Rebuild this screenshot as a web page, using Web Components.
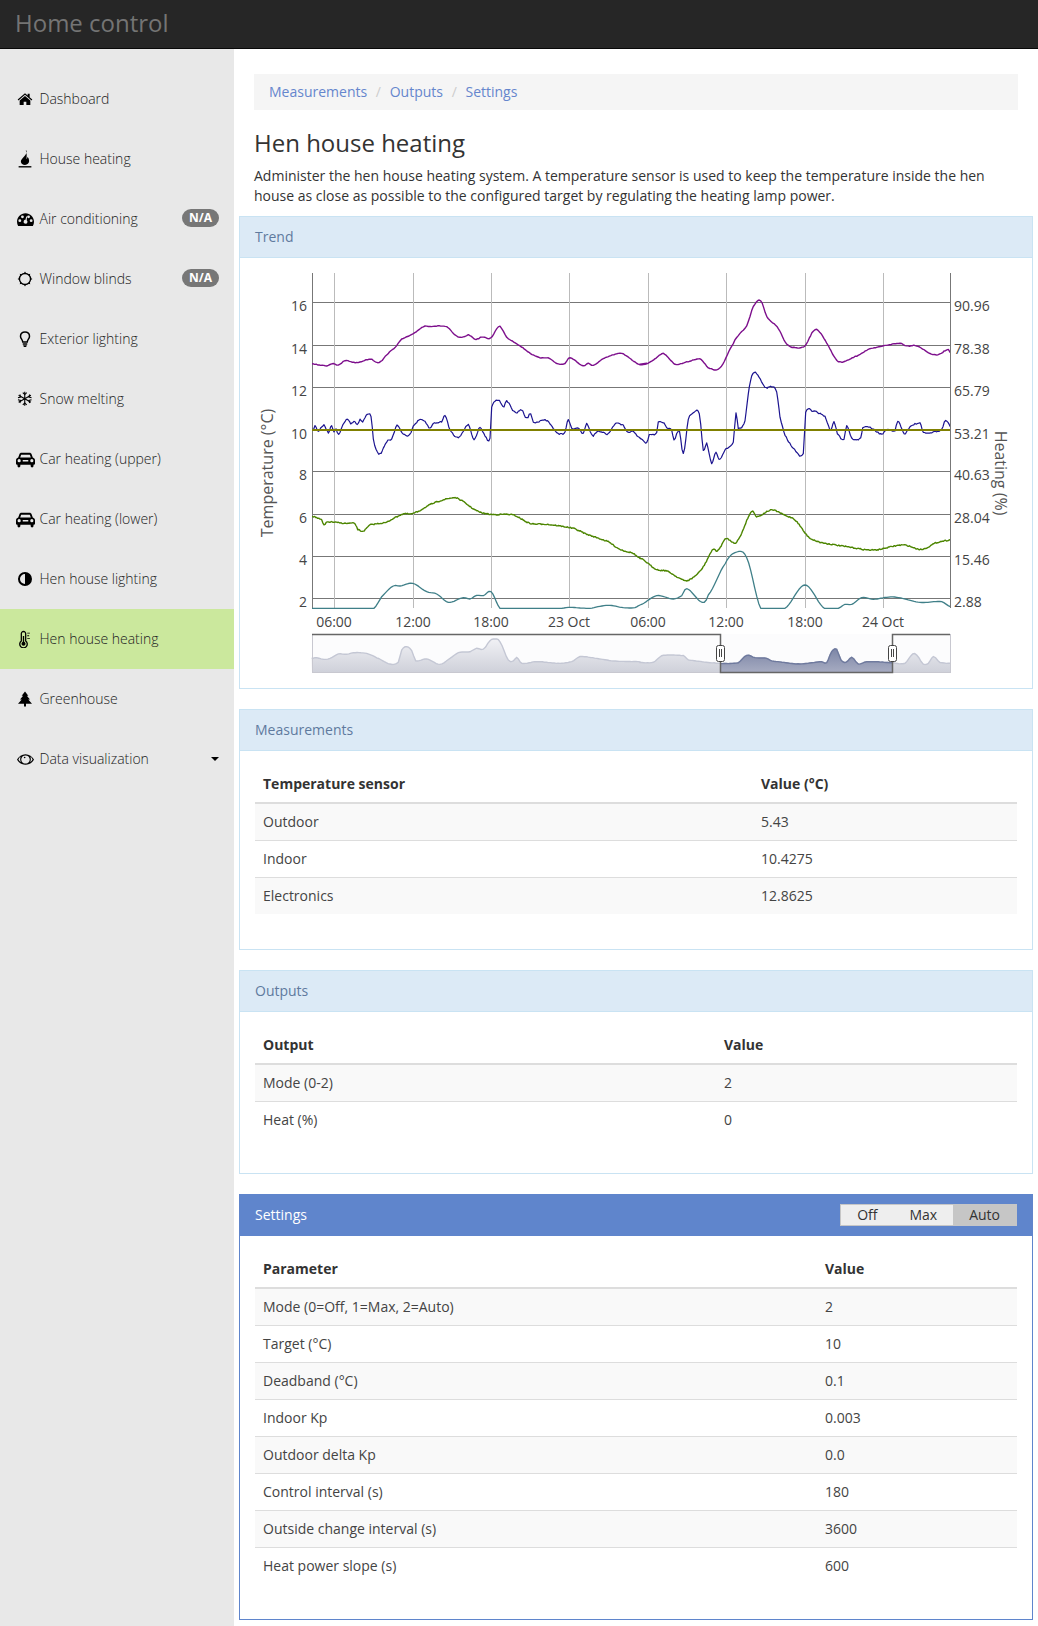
<!DOCTYPE html>
<html>
<head>
<meta charset="utf-8">
<title>Home control</title>
<style>
  html, body { margin: 0; padding: 0; background: #fff; }
  body { font-family: "Open Sans", sans-serif; font-size: 14px; line-height: 20px; color: #333; }
</style>
</head>
<body>
<hc-app>
  <hc-navbar slot="top">Home control</hc-navbar>
  <hc-sidebar slot="side">
    <hc-nav-item icon="home">Dashboard</hc-nav-item>
    <hc-nav-item icon="fire">House heating</hc-nav-item>
    <hc-nav-item icon="dash" badge="N/A">Air conditioning</hc-nav-item>
    <hc-nav-item icon="sun" badge="N/A">Window blinds</hc-nav-item>
    <hc-nav-item icon="bulb">Exterior lighting</hc-nav-item>
    <hc-nav-item icon="snow">Snow melting</hc-nav-item>
    <hc-nav-item icon="car">Car heating (upper)</hc-nav-item>
    <hc-nav-item icon="car">Car heating (lower)</hc-nav-item>
    <hc-nav-item icon="adjust">Hen house lighting</hc-nav-item>
    <hc-nav-item icon="thermo" active>Hen house heating</hc-nav-item>
    <hc-nav-item icon="tree">Greenhouse</hc-nav-item>
    <hc-nav-item icon="eye" caret>Data visualization</hc-nav-item>
  </hc-sidebar>
  <hc-breadcrumb items="Measurements|Outputs|Settings"></hc-breadcrumb>
  <hc-intro heading="Hen house heating">Administer the hen house heating system. A temperature sensor is used to keep the temperature inside the hen house as close as possible to the configured target by regulating the heating lamp power.</hc-intro>
  <hc-panel heading="Trend" flush><hc-trend></hc-trend></hc-panel>
  <hc-panel heading="Measurements">
    <hc-table style="--col:498px">
      <hc-row head a="Temperature sensor" b="Value (°C)"></hc-row>
      <hc-row a="Outdoor" b="5.43"></hc-row>
      <hc-row a="Indoor" b="10.4275"></hc-row>
      <hc-row a="Electronics" b="12.8625"></hc-row>
    </hc-table>
  </hc-panel>
  <hc-panel heading="Outputs">
    <hc-table style="--col:461px">
      <hc-row head a="Output" b="Value"></hc-row>
      <hc-row a="Mode (0-2)" b="2"></hc-row>
      <hc-row a="Heat (%)" b="0"></hc-row>
    </hc-table>
  </hc-panel>
  <hc-panel heading="Settings" primary>
    <hc-toggle slot="actions" items="Off|Max|Auto" selected="Auto"></hc-toggle>
    <hc-table style="--col:562px">
      <hc-row head a="Parameter" b="Value"></hc-row>
      <hc-row a="Mode (0=Off, 1=Max, 2=Auto)" b="2"></hc-row>
      <hc-row a="Target (°C)" b="10"></hc-row>
      <hc-row a="Deadband (°C)" b="0.1"></hc-row>
      <hc-row a="Indoor Kp" b="0.003"></hc-row>
      <hc-row a="Outdoor delta Kp" b="0.0"></hc-row>
      <hc-row a="Control interval (s)" b="180"></hc-row>
      <hc-row a="Outside change interval (s)" b="3600"></hc-row>
      <hc-row a="Heat power slope (s)" b="600"></hc-row>
    </hc-table>
  </hc-panel>
</hc-app>

<script>
const ICONS = {
  home: '<path d="M12 3.2 1 12.6l1.2 1.5L12 5.8l9.800 8.300 1.200-1.500-4-3.400V4h-3v2.600z"/><path d="M12 7.600 4 14.400V21h6v-5h4v5h6v-6.600z"/>',
  fire: '<path d="M14 .5c1 3-1 5.300-3.500 8.500C8.500 11.500 6.500 13 6.500 15.300c0 2.700 2.500 4.700 5.500 4.700s5.500-2.200 5.500-5.200c0-2.500-1-4.200-2-5.700-.3 1.500-.8 2.500-1.700 3 .8-3.700.7-8.100-.8-11.600z"/><rect x="3.500" y="21.500" width="17" height="1.800"/>',
  dash: '<path fill-rule="evenodd" d="M12 3C5.400 3 0 8.400 0 15c0 2.200.6 4.200 1.600 6h20.800c1-1.800 1.600-3.800 1.600-6 0-6.600-5.400-12-12-12zM7.700 6.200a2 2 0 1 1 0 4 2 2 0 0 1 0-4zm8.600 0a2 2 0 1 1 0 4 2 2 0 0 1 0-4zM4 11.700a2 2 0 1 1 0 4 2 2 0 0 1 0-4zm16 0a2 2 0 1 1 0 4 2 2 0 0 1 0-4zm-6.300 1.500c.9.700 1.300 1.900.9 3-.5 1.400-2.100 2.100-3.500 1.600s-2.100-2.100-1.600-3.500c.4-1.100 1.400-1.800 2.500-1.800l1-4.800 1.200.2z"/>',
  sun: '<circle cx="12" cy="12" r="8.300" fill="none" stroke="currentColor" stroke-width="2"/><path d="M12 .8l2 3.400h-4zM12 23.200l2-3.400h-4zM.8 12l3.400 2v-4zM23.200 12l-3.400 2v-4zM4.100 4.100l1 3.800 2.800-2.800zM19.900 4.100l-3.800 1 2.800 2.800zM4.100 19.900l3.800-1-2.800-2.800zM19.900 19.900l-1-3.800-2.800 2.800z"/>',
  bulb: '<path fill="none" stroke="currentColor" stroke-width="2" d="M12 2.500c-3.600 0-6 2.600-6 5.700 0 3.400 2.600 4.400 3 7.800h6c.4-3.400 3-4.400 3-7.800 0-3.100-2.400-5.700-6-5.700z"/><path d="M9 17.500h6v2H9zM9.500 20.300h5l-1 2.200h-3z"/>',
  snow: '<g fill="none" stroke="currentColor" stroke-width="1.700"><path d="M12 1v22M2.500 6.500l19 11M21.500 6.500l-19 11"/><path d="M9 2.500l3 3 3-3M9 21.500l3-3 3 3M1.500 10.500l4-1.100-1.100-4M22.500 13.500l-4 1.100 1.100 4M22.500 10.500l-4-1.100 1.100-4M1.500 13.500l4 1.100-1.100 4"/></g>',
  car: '<path fill-rule="evenodd" d="M6.800 3.500h10.400c1.100 0 2 .7 2.400 1.700l1.600 4.300c1.600.4 2.800 1.800 2.800 3.500v4.500c0 .6-.4 1-1 1h-.9v1.700c0 1-.8 1.800-1.800 1.800s-1.800-.8-1.800-1.800V18.500H5.500v1.700c0 1-.8 1.800-1.800 1.800s-1.800-.8-1.800-1.800V18.500H1c-.6 0-1-.4-1-1V13c0-1.700 1.200-3.100 2.800-3.500l1.600-4.300c.4-1 1.300-1.700 2.400-1.700zM7 6c-.3 0-.5.1-.6.400L5.300 9.500h13.400l-1.100-3.100c-.1-.3-.3-.4-.6-.4zM4 11.500a2 2 0 1 0 0 4 2 2 0 0 0 0-4zm16 0a2 2 0 1 0 0 4 2 2 0 0 0 0-4zM8.500 12.500v2h7v-2z"/>',
  adjust: '<path fill-rule="evenodd" d="M12 1.500a10.500 10.500 0 1 0 0 21 10.500 10.500 0 0 0 0-21zm0 3v15a7.500 7.500 0 0 1 0-15z"/>',
  thermo: '<path fill="none" stroke="currentColor" stroke-width="1.700" d="M10 2c-1.700 0-2.900 1.200-2.900 2.800v9.900a5 5 0 1 0 5.800 0V4.800C12.900 3.200 11.700 2 10 2z"/><circle cx="10" cy="18.200" r="2.700"/><path d="M9.100 8h1.800v9H9.100zM15 3.500h3.500v1.300H15zM15 7h2.500v1.300H15zM15 10.500h3.500v1.300H15z"/>',
  tree: '<path d="M12 .8l5 6.200h-2.200l4.700 5.800h-2.600L22.500 19H13.500v4.200h-3V19H1.500l5.600-6.200H4.500L9.200 7H7z"/>',
  eye: '<path fill-rule="evenodd" d="M12 4.500C6.800 4.500 2.500 7.500 0 12c2.500 4.500 6.800 7.500 12 7.500s9.500-3 12-7.500c-2.500-4.500-6.800-7.500-12-7.500zM12 6.300c-3.300 0-6 2.300-6 5.700s2.700 5.700 6 5.700 6-2.300 6-5.700-2.700-5.700-6-5.700zM5.100 7.800C4.700 9 4.400 10.400 4.500 12c.1 1.500.4 2.900 1 4C4 15 2.900 13.700 2 12c.8-1.700 1.800-3.100 3.100-4.200zm13.800 0c1.300 1.100 2.300 2.500 3.100 4.200-.9 1.700-2 3-3.500 4 .6-1.100.9-2.500 1-4 .1-1.600-.2-3-.6-4.200zM10.800 8c.7 0 1.200.5 1.200 1.200s-.5 1.200-1.200 1.200-1.200-.5-1.200-1.200.5-1.200 1.200-1.200z"/>'
};
const ICON_SIZE = { home: 16, snow: 15.5, adjust: 16, tree: 16, dash: 17, sun: 16, eye: 17, car: 19 };

customElements.define('hc-app', class extends HTMLElement {
  constructor() {
    super();
    const root = this.attachShadow({ mode: 'open' });
    root.innerHTML = `
    <style>
      :host { display: block; width: 1038px; height: 1626px; overflow: hidden; }
      .body { display: flex; height: 1577px; }
      main { width: 764px; padding: 25px 20px 0 20px; }
    </style>
    <slot name="top"></slot>
    <div class="body">
      <slot name="side"></slot>
      <main><slot></slot></main>
    </div>
    `;
  }
});

customElements.define('hc-navbar', class extends HTMLElement {
  constructor() {
    super();
    const root = this.attachShadow({ mode: 'open' });
    root.innerHTML = `
    <style>
      :host {
        display: flex; align-items: center; box-sizing: border-box; height: 49px; padding: 0 0 2px 15px;
        background: #262626; border-bottom: 1px solid #080808; color: #747474; font-size: 24px;
      }
    </style>
    <slot></slot>
    `;
  }
});

customElements.define('hc-sidebar', class extends HTMLElement {
  constructor() {
    super();
    const root = this.attachShadow({ mode: 'open' });
    root.innerHTML = `
    <style>
      :host { display: block; flex: none; box-sizing: border-box; width: 234px; padding-top: 20px; background: #e8e8e8; }
    </style>
    <slot></slot>
    `;
  }
});

customElements.define('hc-nav-item', class extends HTMLElement {
  connectedCallback() {
    if (this.shadowRoot) return;
    const root = this.attachShadow({ mode: 'open' });
    const badge = this.getAttribute('badge');
    const name = this.getAttribute('icon');
    const size = ICON_SIZE[name] || 18;
    root.innerHTML = `
    <style>
      :host { display: flex; align-items: center; height: 60px; padding: 0 15px 0 16px; color: #222; font-weight: 300; }
      :host([active]) { background: #cbe89d; }
      .icon { width: 18px; margin-right: 5.500px; flex: none; display: flex; justify-content: center; }
      svg { width: ${size}px; height: ${size}px; flex: none; fill: #000; color: #000; }
      .text { flex: 1; padding-bottom: 1px; }
      .badge { background: #777; color: #fff; font-size: 12px; font-weight: 700; line-height: 12px; padding: 3px 7px; border-radius: 10px; margin-top: -2px; }
      .caret { width: 0; height: 0; border-top: 4px solid #000; border-left: 4px solid transparent; border-right: 4px solid transparent; }
    </style>
    <span class="icon"><svg viewBox="0 0 24 24">${ICONS[name]}</svg></span>
    <span class="text"><slot></slot></span>
    ${badge ? `<span class="badge">${badge}</span>` : ''}
    ${this.hasAttribute('caret') ? '<span class="caret"></span>' : ''}
    `;
  }
});

customElements.define('hc-breadcrumb', class extends HTMLElement {
  connectedCallback() {
    if (this.shadowRoot) return;
    const root = this.attachShadow({ mode: 'open' });
    const links = this.getAttribute('items').split('|').map(t => `<a>${t}</a>`).join('<i>/</i>');
    root.innerHTML = `
    <style>
      :host { display: block; height: 36px; box-sizing: border-box; padding: 8px 15px; background: #f5f5f5; }
      a { color: #6586cd; }
      i { font-style: normal; color: #ccc; padding: 0 8.700px; }
    </style>
    ${links}
    `;
  }
});

customElements.define('hc-intro', class extends HTMLElement {
  connectedCallback() {
    if (this.shadowRoot) return;
    const root = this.attachShadow({ mode: 'open' });
    root.innerHTML = `
    <style>
      :host { display: block; height: 106px; box-sizing: border-box; padding-top: 20px; }
      h3 { margin: 0 0 10px; font-size: 24px; font-weight: 400; line-height: 26px; color: #333; }
      p { margin: 0; color: #333; }
    </style>
    <h3>${this.getAttribute('heading')}</h3>
    <p><slot></slot></p>
    `;
  }
});

customElements.define('hc-panel', class extends HTMLElement {
  connectedCallback() {
    if (this.shadowRoot) return;
    const root = this.attachShadow({ mode: 'open' });
    const flush = this.hasAttribute('flush');
    root.innerHTML = `
    <style>
      :host { display: block; margin: 0 -15px 20px; border: 1px solid #c9e3f3; background: #fff; }
      :host([primary]) { border-color: #5f85cc; }
      header {
        display: flex; align-items: center; justify-content: space-between; box-sizing: border-box;
        height: 41px; padding: 0 15px; background: #dceaf6; border-bottom: 1px solid #c9e3f3; color: #5f7a9e;
      }
      :host([primary]) header { background: #5f85cc; color: #fff; border-color: #5f85cc; }
      .body { padding: ${flush ? '0' : '15px 15px 35px'}; }
    </style>
    <header><span>${this.getAttribute('heading')}</span><slot name="actions"></slot></header>
    <div class="body"><slot></slot></div>
    `;
  }
});

customElements.define('hc-table', class extends HTMLElement {
  constructor() {
    super();
    const root = this.attachShadow({ mode: 'open' });
    root.innerHTML = `<style>:host { display: block; }</style><slot></slot>`;
  }
});

customElements.define('hc-row', class extends HTMLElement {
  connectedCallback() {
    if (this.shadowRoot) return;
    const root = this.attachShadow({ mode: 'open' });
    root.innerHTML = `
    <style>
      :host { display: grid; grid-template-columns: var(--col) 1fr; height: 36px; align-items: center; border-top: 1px solid #ddd; color: #444; }
      :host([head]) { height: 36px; border-top: 0; border-bottom: 2px solid #ddd; font-weight: 700; color: #333; }
      :host(:nth-child(even)) { background: #f9f9f9; }
      :host(:nth-child(2)) { border-top: 0; }
      span { padding: 0 8px; }
    </style>
    <span>${this.getAttribute('a')}</span><span>${this.getAttribute('b')}</span>
    `;
  }
});

customElements.define('hc-toggle', class extends HTMLElement {
  connectedCallback() {
    if (this.shadowRoot) return;
    const root = this.attachShadow({ mode: 'open' });
    const sel = this.getAttribute('selected');
    const items = this.getAttribute('items').split('|');
    root.innerHTML = `
    <style>
      :host { display: flex; border: 1px solid #c6c6c6; color: #333; }
      span { background: #eee; line-height: 20px; padding: 0 16px; }
      span.on { background: #c6c6c6; }
    </style>
    ${items.map(t => `<span class="${t === sel ? 'on' : ''}">${t}</span>`).join('')}
    `;
  }
});

// traced from the trend picture, points are [x, y] in page pixels once shifted
function shift(base, flat) {
  const out = [];
  for (let i = 0; i < flat.length; i += 2) {
    out.push([base[0] + flat[i] / 3, base[1] + flat[i + 1] / 3]);
  }
  return out;
}
const TOP_L = [250, 260], TOP_R = [640, 260], LOW_L = [250, 490], LOW_R = [640, 490];

const PURPLE = shift(TOP_L, [185,312,230,317,250,310,265,316,285,302,320,308,362,297,378,306,392,305,410,284,435,262,455,238,490,222,520,200,540,199,590,200,615,225,635,233,655,225,678,238,695,231,722,234,745,201,755,205,770,232,800,252,860,290,895,294,925,312,945,310,960,293,1000,318,1015,310,1030,316,1060,296,1105,281,1125,285,1165,312,1190,311])
  .concat(shift(TOP_R, [0,313,20,311,40,300,70,281,105,312,140,306,180,297,205,323,240,324,280,250,300,220,320,198,340,140,362,122,380,170,415,205,440,252,465,263,495,257,520,214,535,212,560,250,595,305,650,288,685,268,780,250,800,258,830,257,870,280,895,284,925,268,931,278]));

const BLUE = shift(TOP_L, [185,505,190,512,195,497,205,512,222,495,235,518,245,495,252,518,258,505,266,525,278,495,292,478,302,490,315,485,322,495,330,478,338,485,352,463,363,468,370,535,378,568,390,582,410,545,425,538,441,497,460,522,480,524,490,498,510,480,525,485,540,505,550,490,575,485,585,467,600,510,625,532,655,495,672,538,690,503,705,528,720,535,725,440,745,420,762,440,770,423,795,458,815,450,830,475,842,460,850,488,885,480,900,490,920,518,935,522,945,515,955,480,965,505,985,505,1000,520,1010,490,1027,527,1040,515,1060,516,1075,522,1095,492,1120,497,1130,515,1150,515,1165,532,1170,535])
  .concat(shift(TOP_R, [0,535,20,548,28,525,50,520,55,485,72,490,80,505,95,510,102,538,118,512,130,582,145,480,160,460,178,460,190,570,200,550,215,610,228,575,237,600,255,570,280,545,288,460,295,505,315,482,325,400,335,348,350,340,375,382,395,380,410,395,420,470,435,525,460,565,490,582,497,458,515,452,555,470,572,510,582,485,592,520,612,540,620,498,635,535,662,535,668,503,690,503,725,522,740,510,765,512,773,483,793,520,810,500,840,490,850,518,905,510,917,480,931,500]));

const GREEN = shift(LOW_L, [185,78,215,90,222,105,232,96,285,100,315,101,323,118,340,123,360,105,410,97,430,85,460,72,490,70,545,42,600,25,625,27,680,62,720,73,790,75,840,100,890,103,970,115,1010,133,1075,155,1110,178,1150,190,1170,205])
  .concat(shift(LOW_R, [0,205,50,238,80,243,120,265,140,272,165,258,190,230,220,178,232,183,258,146,275,155,293,151,335,65,350,80,395,60,440,78,465,90,505,140,540,157,620,170,700,180,790,165,845,178,890,158,931,150]));

const TEAL = shift(LOW_L, [185,355,372,355,395,320,430,288,450,288,488,280,530,305,560,312,595,337,640,323,660,327,680,316,700,317,723,305,750,355,935,355,955,352,1020,355,1050,349,1080,346,1120,353,1155,353,1170,345])
  .concat(shift(LOW_R, [0,345,50,317,100,327,125,317,140,296,187,337,205,315,255,222,285,188,320,203,362,355,435,355,495,285,553,355,595,355,615,343,635,343,665,323,700,328,740,322,770,322,840,337,905,335,931,350]));

const NAV = shift(LOW_L, [185,505,200,503,220,508,240,505,265,492,290,493,310,488,350,490,380,503,420,522,445,517,455,480,470,470,485,482,497,512,530,507,570,523,600,505,625,488,660,485,680,475,700,478,720,452,735,447,750,455,775,510,790,513,800,503,815,520,860,515,930,520,965,515,990,500,1040,505,1090,513,1170,515])
  .concat(shift(LOW_R, [0,517,40,517,65,497,130,497,145,510,240,520,295,518,320,496,345,503,380,505,395,513,480,522,545,515,560,518,575,485,590,478,603,510,618,517,635,502,655,522,680,515,756,518,795,520,818,492,830,495,850,522,865,520,880,500,900,517,931,520]));

let seed = 7;
function rnd() {
  seed = (seed * 16807) % 2147483647;
  return seed / 2147483647 - 0.5;
}

// resample through a Catmull-Rom curve, plus a little sensor noise; floor keeps it on the plot bottom
function rough(points, step, amount, floor = 9999) {
  let d = '';
  const at = i => points[Math.max(0, Math.min(points.length - 1, i))];
  for (let i = 0; i < points.length - 1; i++) {
    const p0 = at(i - 1), p1 = at(i), p2 = at(i + 1), p3 = at(i + 2);
    const n = Math.max(1, Math.round((p2[0] - p1[0]) / step));
    for (let j = 0; j < n; j++) {
      const t = j / n, t2 = t * t, t3 = t2 * t;
      const y = .5 * (2 * p1[1] + (p2[1] - p0[1]) * t + (2 * p0[1] - 5 * p1[1] + 4 * p2[1] - p3[1]) * t2 + (3 * p1[1] - p0[1] - 3 * p2[1] + p3[1]) * t3);
      const x = p1[0] + (p2[0] - p1[0]) * t;
      d += `${x.toFixed(1)},${Math.min(floor, y + rnd() * amount).toFixed(1)} `;
    }
  }
  const last = points[points.length - 1];
  return d + last[0].toFixed(1) + ',' + last[1].toFixed(1);
}

customElements.define('hc-trend', class extends HTMLElement {
  connectedCallback() {
    if (this.shadowRoot) return;
    const root = this.attachShadow({ mode: 'open' });
    const rows = [[302, '16', '90.96'], [345, '14', '78.38'], [387, '12', '65.79'], [430, '10', '53.21'], [471, '8', '40.63'], [514, '6', '28.04'], [556, '4', '15.46'], [598, '2', '2.88']];
    const cols = [[334, '06:00'], [413, '12:00'], [491, '18:00'], [569, '23 Oct'], [648, '06:00'], [726, '12:00'], [805, '18:00'], [883, '24 Oct']];
    const hLines = rows.map(r => `<line x1="312" x2="950" y1="${r[0] + .5}" y2="${r[0] + .5}" stroke="#777"/>`).join('');
    const vLines = cols.map(c => `<line x1="${c[0] + .5}" x2="${c[0] + .5}" y1="273" y2="608" stroke="#bbb"/>`).join('');
    const left = rows.map(r => `<text x="307" y="${r[0] + 9}" text-anchor="end">${r[1]}</text>`).join('');
    const right = rows.map(r => `<text x="954" y="${r[0] + 9}">${r[2]}</text>`).join('');
    const bottom = cols.map(c => `<text x="${c[0]}" y="627" text-anchor="middle">${c[1]}</text>`).join('');
    const navLine = rough(NAV, 2, .3);
    const navArea = `312,672 ${navLine} 950,672`;
    root.innerHTML = `
    <style>
      :host { display: block; height: 430px; }
      svg { display: block; font-family: "Open Sans", sans-serif; font-size: 14px; fill: #444; }
      polyline { fill: none; }
    </style>
    <svg width="792" height="430" viewBox="240 258 792 430">
      <defs>
        <clipPath id="plot"><rect x="312" y="273" width="638" height="336"/></clipPath>
        <clipPath id="sel"><rect x="720" y="634" width="172" height="38"/></clipPath>
        <linearGradient id="light" gradientUnits="userSpaceOnUse" x1="0" y1="634" x2="0" y2="672"><stop offset="0" stop-color="#f6f6f9"/><stop offset="1" stop-color="#cfd1da"/></linearGradient>
        <linearGradient id="dark" gradientUnits="userSpaceOnUse" x1="0" y1="650" x2="0" y2="672"><stop offset="0" stop-color="#7f88a8"/><stop offset="1" stop-color="#a6abc1"/></linearGradient>
      </defs>
      ${hLines}${vLines}
      <line x1="312.5" x2="312.5" y1="273" y2="608" stroke="#777"/>
      <line x1="950.5" x2="950.5" y1="273" y2="608" stroke="#777"/>
      <g clip-path="url(#plot)" stroke-linejoin="round">
        <polyline points="${rough(PURPLE, 1.5, .7)}" stroke="#7d0f8c" stroke-width="1.4"/>
        <polyline points="${rough(GREEN, 1, 1.1)}" stroke="#4c8500" stroke-width="1.4"/>
        <polyline points="${rough(TEAL, 2, 0, 608.3)}" stroke="#3f7f88" stroke-width="1.3"/>
        <polyline points="${rough(BLUE, 1.2, 1.4)}" stroke="#1c1490" stroke-width="1.2"/>
        <line x1="312" x2="950" y1="430" y2="430" stroke="#808000" stroke-width="2"/>
      </g>
      ${left}${right}${bottom}
      <text transform="translate(273 473) rotate(-90)" text-anchor="middle" font-size="16" fill="#555">Temperature (°C)</text>
      <text transform="translate(995 473) rotate(90)" text-anchor="middle" font-size="16" fill="#555">Heating (%)</text>
      <rect x="312" y="634" width="638" height="39" fill="#fcfcfd"/>
      <polygon points="${navArea}" fill="url(#light)"/>
      <polyline points="${navLine}" stroke="#c4c7d4" stroke-width="1.4"/>
      <g clip-path="url(#sel)">
        <polygon points="${navArea}" fill="url(#dark)"/>
        <polyline points="${navLine}" stroke="#6f7a9e" stroke-width="1.4"/>
      </g>
      <line x1="312" x2="950" y1="672.500" y2="672.500" stroke="#c8c8d0"/>
      <line x1="312.500" x2="312.500" y1="634" y2="673" stroke="#c8c8d0"/>
      <line x1="950.500" x2="950.500" y1="634" y2="673" stroke="#c8c8d0"/>
      <polyline points="312,634.500 720.500,634.500 720.500,672.500 892.500,672.500 892.500,634.500 950,634.500" stroke="#666" stroke-width="1.500"/>
      <g fill="#fff" stroke="#444">
        <rect x="716.500" y="645.500" width="8" height="16" rx="2"/>
        <rect x="888.500" y="645.500" width="8" height="16" rx="2"/>
        <path d="M719.500 649v8M721.500 649v8M891.500 649v8M893.500 649v8" fill="none"/>
      </g>
    </svg>
    `;
  }
});
</script>
</body>
</html>
